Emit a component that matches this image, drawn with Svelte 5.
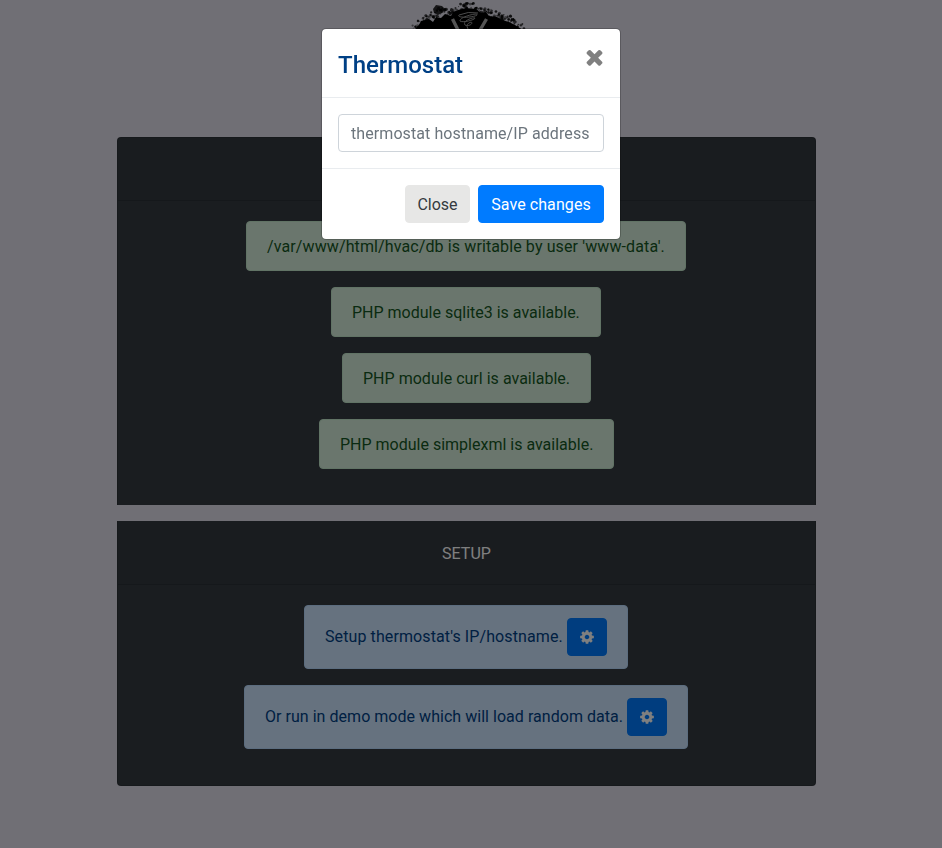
<script>
  const checks = [
    { text: "/var/www/html/hvac/db is writable by user 'www-data'.", width: 440, tracking: 0.113 },
    { text: 'PHP module sqlite3 is available.', width: 270, tracking: 0 },
    { text: 'PHP module curl is available.', width: 249, tracking: 0.02 },
    { text: 'PHP module simplexml is available.', width: 295, tracking: 0 }
  ];
  const steps = [
    { text: "Setup thermostat's IP/hostname.", width: 324, tracking: 0.1 },
    { text: 'Or run in demo mode which will load random data.', width: 444, tracking: 0.035 }
  ];
  let hostname = $state('');

  // Ragged ink rim of the logo: small blots scattered along the outline.
  const rim = [[3, 29], [9, 22], [17, 18], [25, 13], [33, 10], [41, 13], [47, 8], [56, 6], [65, 7], [73, 12], [81, 13], [88, 16], [97, 19], [104, 23], [112, 29]];
  let seed = 11;
  const rnd = () => (seed = (seed * 16807) % 2147483647) / 2147483647;
  const blots = Array.from({ length: 210 }, () => {
    const t = rnd() * (rim.length - 1);
    const i = Math.floor(t);
    const f = t - i;
    return {
      x: rim[i][0] + (rim[i + 1][0] - rim[i][0]) * f + (rnd() - 0.5) * 3,
      y: rim[i][1] + (rim[i + 1][1] - rim[i][1]) * f + (rnd() - 0.45) * 8,
      r: 0.4 + rnd() * 1.3,
      o: 0.3 + rnd() * 0.6
    };
  });
</script>

<div class="page">
  <div class="brand">
    <svg class="logo" width="120" height="112" viewBox="0 0 120 112">
      <g class="ink">
        <path d="M3 30 L8 25 10 21 18 19 22 22 25 17 30 18 34 14 40 16 42 12 47 10 55 8 65 9 70 13 75 12 78 16 86 17 91 20 98 22 104 25 112 30 Q112 100 58 108 Q3 100 3 30Z" />
        <path d="M22 9 L25 5 31 6 34 9 31 13 27 15 23 13Z" opacity=".8" />
        {#each blots as b}
          <circle cx={b.x} cy={b.y} r={b.r} opacity={b.o} />
        {/each}
      </g>
      <path class="soft" d="M41.500 19 L47.500 31 M75.500 19 L68.500 31" fill="none" stroke="#aaa" stroke-width="3.4" />
      <path d="M67 13 Q57 11 48 15 C45 18 62 18 66 15 C68 12 48 17 49 21 C51 23 64 20 64 18 C62 17 51 21 54 25 C58 27 63 23 60 22 Q54 24 57 29" fill="none" stroke="#999" stroke-width="1" />
    </svg>
  </div>
  <main>
    <section class="card first">
      <header></header>
      <div class="body">
        {#each checks as c}
          <div class="alert success" class:even={c.width % 2 === 0} style:width="{c.width}px" style:letter-spacing="{c.tracking}px"><span>{c.text}</span></div>
        {/each}
      </div>
    </section>
    <section class="card last">
      <header>SETUP</header>
      <div class="body">
        {#each steps as s}
          <div class="alert info even" style:width="{s.width}px" style:letter-spacing="{s.tracking}px">
            <span>{s.text}</span>
            <button class="btn primary gear" aria-label="Configure">
              <svg width="14" height="16" viewBox="0 0 1536 1792"><path fill="#fff" d="M1024 896q0-106-75-181t-181-75-181 75-75 181 75 181 181 75 181-75 75-181zm512-109v222q0 12-8 23t-20 13l-185 28q-19 54-39 91 35 50 107 138 10 12 10 25t-9 23q-27 37-99 108t-94 71q-12 0-26-9l-138-108q-44 23-91 38-16 136-29 186-7 28-36 28h-222q-14 0-24.500-8.500t-11.500-21.500l-28-184q-49-16-90-37l-141 107q-10 9-25 9-14 0-25-11-126-114-165-168-7-10-7-23 0-12 8-23 15-21 51-66.500t54-70.500q-27-50-41-99l-183-27q-13-2-21-12.500t-8-23.500v-222q0-12 8-23t19-13l186-28q14-46 39-92-40-57-107-138-10-12-10-24 0-10 9-23 26-36 98.500-107.500t94.500-71.500q13 0 26 10l138 107q44-23 91-38 16-136 29-186 7-28 36-28h222q14 0 24.500 8.500t11.500 21.500l28 184q49 16 90 37l142-107q9-9 24-9 13 0 25 10 129 119 165 170 7 8 7 22 0 12-8 23-15 21-51 66.500t-54 70.500q26 50 41 98l183 28q13 2 21 12.500t8 23.500z" /></svg>
            </button>
          </div>
        {/each}
      </div>
    </section>
  </main>
</div>

<div class="backdrop">
  <div class="modal" role="dialog" aria-labelledby="modal-title">
    <div class="modal-header">
      <h5 id="modal-title">Thermostat</h5>
      <button class="dismiss" aria-label="Dismiss">
        <svg width="19" height="24" viewBox="0 0 1408 1792"><path fill="#808080" d="M1298 1322q0 40-28 68l-136 136q-28 28-68 28t-68-28l-294-294-294 294q-28 28-68 28t-68-28l-136-136q-28-28-28-68t28-68l294-294-294-294q-28-28-28-68t28-68l136-136q28-28 68-28t68 28l294 294 294-294q28-28 68-28t68 28l136 136q28 28 28 68t-28 68l-294 294 294 294q28 28 28 68z" /></svg>
      </button>
    </div>
    <div class="modal-body">
      <input bind:value={hostname} placeholder="thermostat hostname/IP address" />
    </div>
    <div class="modal-footer">
      <button class="btn secondary">Close</button>
      <button class="btn primary save">Save changes</button>
    </div>
  </div>
</div>

<style>
  :global(body) { margin: 0; overflow: hidden; background: #e1dfeb; }
  .page, .backdrop { font: 16px/24px Roboto, sans-serif; }
  .page *, .backdrop, .backdrop * { box-sizing: border-box; }
  .page { height: 848px; }
  .brand { height: 137px; width: 942px; padding-left: 411px; }
  .logo { display: block; }
  .ink { filter: blur(.6px); }
  .soft { filter: blur(.5px); }
  main { width: 699px; margin-left: 117px; }
  .card { background: #343a40; border: 1px solid rgba(0, 0, 0, .125); }
  .first { height: 368px; border-bottom: 0; border-radius: 4px 4px 0 0; margin-bottom: 16px; }
  .last { height: 265px; border-top: 0; border-radius: 0 0 4px 4px; }
  header {
    height: 64px; padding-top: 21px; text-align: center; color: #fff;
    background: rgba(0, 0, 0, .03); border-bottom: 1px solid rgba(0, 0, 0, .125);
  }
  .first header { height: 63px; }
  .body { padding: 20px 0; display: flex; flex-direction: column; align-items: center; gap: 16px; }
  .alert {
    display: flex; align-items: center; height: 50px; padding: 0 20px;
    border: 1px solid; border-radius: 4px; white-space: nowrap;
  }
  .even { margin-right: 1px; }
  .success { color: #155724; background: #d4edda; border-color: #c3e6cb; }
  .success span { padding-top: 2px; }
  .info { height: 64px; justify-content: space-between; color: #004085; background: #cce5ff; border-color: #b8daff; }
  .btn {
    height: 38px; padding: 2px 12px 0; border: 1px solid transparent; border-radius: 4px;
    font: inherit; white-space: nowrap;
  }
  .primary { background: #007bff; border-color: #007bff; color: #fff; }
  .secondary { width: 65px; padding-left: 0; padding-right: 0; background: #e7e7e6; border-color: #e7e7e6; color: #343a40; }
  .save { width: 126px; letter-spacing: .08px; }
  .gear { display: flex; align-items: center; justify-content: center; width: 40px; padding: 0; }
  .backdrop { position: fixed; inset: 0; background: rgba(0, 0, 0, .5); }
  .modal {
    width: 300px; height: 212px; margin: 28px auto 0; background: #fff; background-clip: padding-box;
    border: 1px solid rgba(0, 0, 0, .2); border-radius: 5px;
  }
  .modal-header {
    display: flex; justify-content: space-between; align-items: flex-start;
    height: 69px; padding: 16px; border-bottom: 1px solid #e9ecef;
  }
  h5 { margin: 2px 0 0; font-size: 24px; line-height: 36px; font-weight: 500; color: #004085; }
  .dismiss { padding: 0; border: 0; background: none; line-height: 0; }
  .modal-body { padding: 16px; }
  input {
    display: block; width: 100%; height: 38px; padding: 6px 12px; border: 1px solid #ced4da;
    border-radius: 4px; font: inherit; letter-spacing: .085px; color: #495057;
  }
  input::placeholder { color: #6c757d; opacity: 1; }
  .modal-footer { display: flex; justify-content: flex-end; gap: 8px; padding: 16px; border-top: 1px solid #e9ecef; }
</style>
